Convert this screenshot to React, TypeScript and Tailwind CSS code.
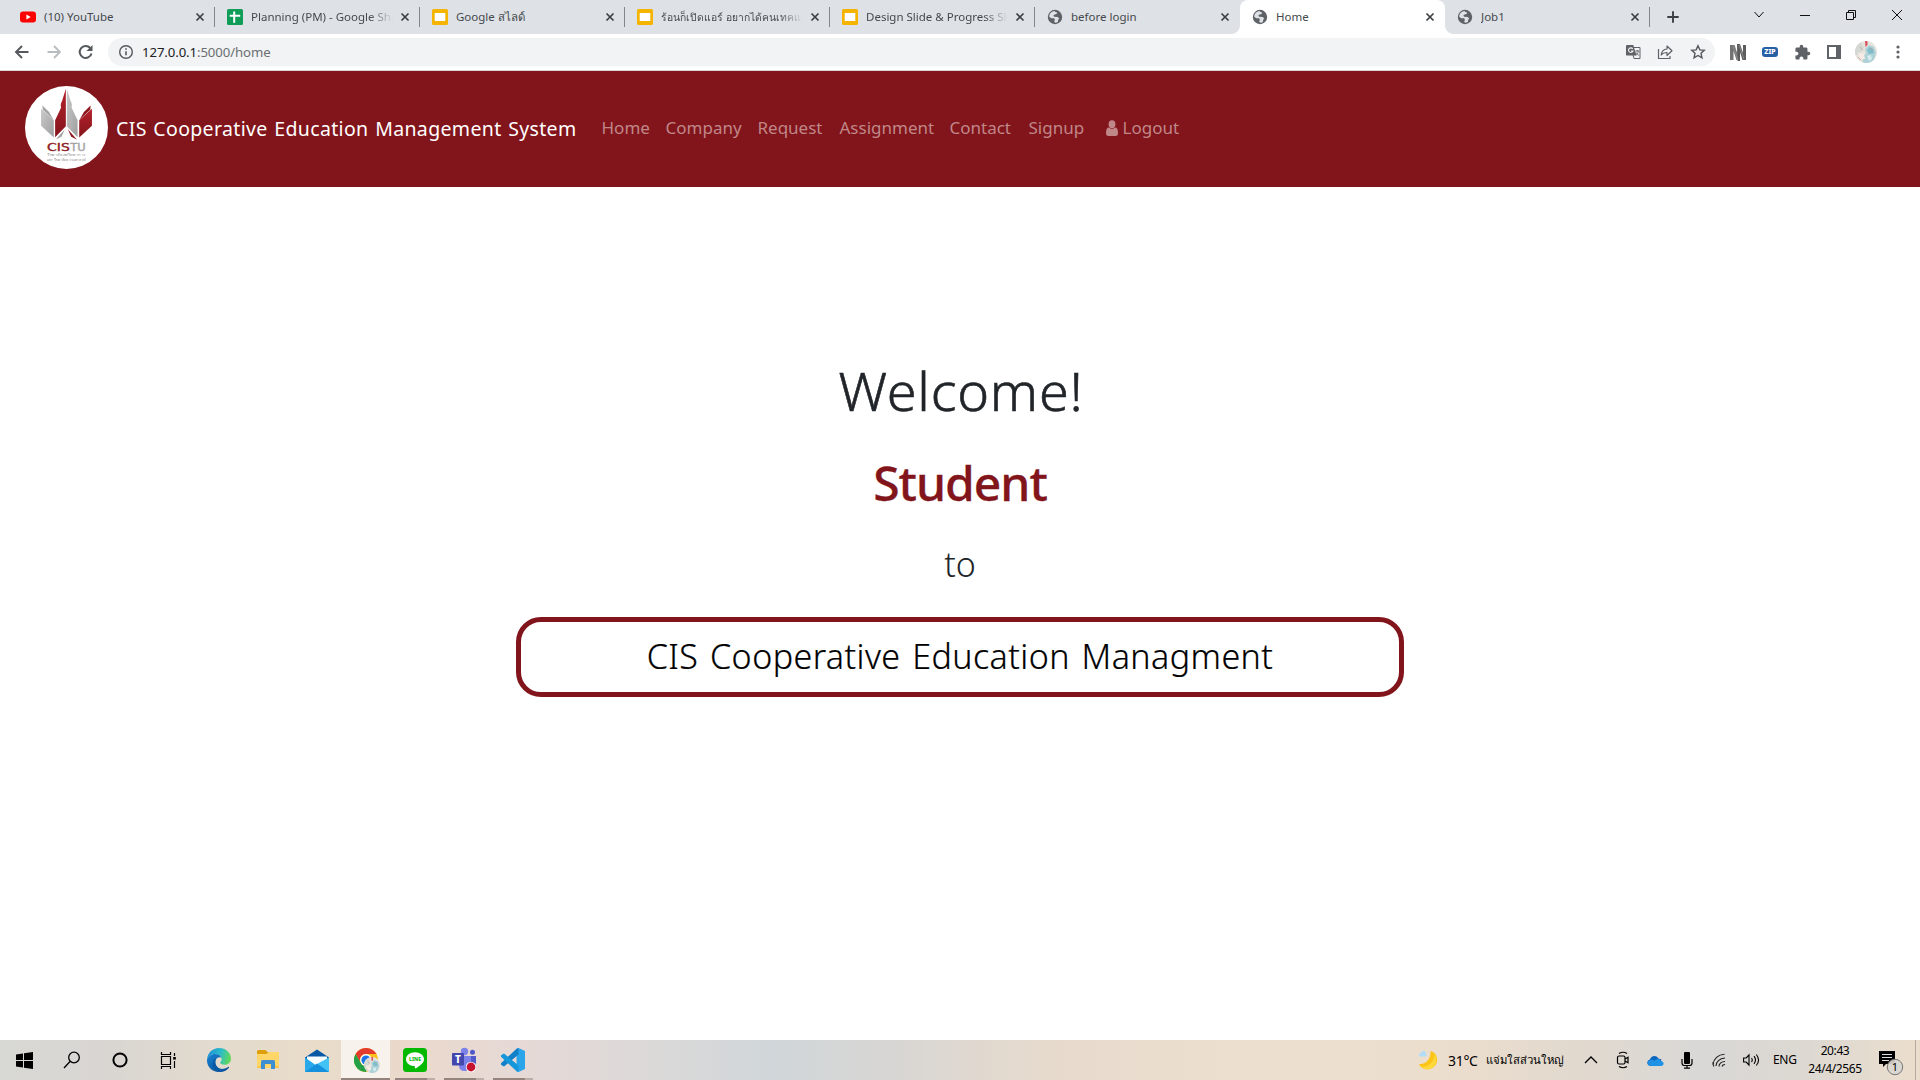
import type { ReactNode } from "react";
import { MdExtension } from "react-icons/md";

type Favicon = "youtube" | "sheets" | "slides" | "globe";

function FaviconIcon({ kind }: { kind: Favicon }) {
  if (kind === "youtube")
    return (
      <svg width="16" height="16" viewBox="0 0 16 16">
        <rect y="2.4" width="16" height="11.2" rx="3" fill="#f00" />
        <path d="M6.4 5.5v5l4.3-2.5z" fill="#fff" />
      </svg>
    );
  if (kind === "sheets")
    return (
      <svg width="16" height="16" viewBox="0 0 16 16">
        <rect width="16" height="16" rx="1.5" fill="#0f9d58" />
        <path d="M6.2 2.5h2v3.2h5v2h-5v6h-2v-6h-3.5v-2h3.5z" fill="#fff" />
      </svg>
    );
  if (kind === "slides")
    return (
      <svg width="16" height="16" viewBox="0 0 16 16">
        <rect width="16" height="16" rx="1.5" fill="#f5b400" />
        <rect x="2.7" y="4" width="10.6" height="8" fill="#fff" />
      </svg>
    );
  return (
    <svg width="16" height="16" viewBox="0 0 16 16">
      <circle cx="8" cy="8" r="7.2" fill="#5f6368" />
      <path
        d="M7.3 2.1C4 2.6 2.2 5 2.2 7.7l2.1 1.5 2.7.1.9 1.2-.7 1.9.9 1.4c.9 0 2-.3 2.800-.8l.2-2 1.1-1.5-1.5-1.4-3.5-.4-.9-1.3 1.4-1 1.9-.3.5-1.5-1.600-.6z"
        fill="#dee1e6"
      />
    </svg>
  );
}

function CloseMark() {
  return (
    <svg width="16" height="16" viewBox="0 0 16 16" className="shrink-0">
      <path d="M4.500 4.500l7 7m0-7l-7 7" stroke="#3c4043" strokeWidth="1.700" />
    </svg>
  );
}

interface TabInfo {
  icon: Favicon;
  title: string;
  active?: boolean;
  divider?: boolean;
  faded?: boolean;
  thai?: boolean;
}

const tabs: TabInfo[] = [
  { icon: "youtube", title: "(10) YouTube", divider: true },
  { icon: "sheets", title: "Planning (PM) - Google Sheets", divider: true, faded: true },
  { icon: "slides", title: "Google สไลด์", divider: true },
  { icon: "slides", title: "ร้อนก็เปิดแอร์ อยากได้คนเทคแคร์", divider: true, faded: true, thai: true },
  { icon: "slides", title: "Design Slide & Progress Slide", divider: true, faded: true },
  { icon: "globe", title: "before login" },
  { icon: "globe", title: "Home", active: true },
  { icon: "globe", title: "Job1", divider: true },
];

function Tab({ tab }: { tab: TabInfo }) {
  return (
    <div
      className={`relative flex h-[34px] w-[205px] shrink-0 items-center pl-[12px] pr-[7px] first:pl-[10px] ${
        tab.active ? "rounded-t-lg bg-white" : ""
      }`}
    >
      {tab.active && (
        <>
          <span className="absolute bottom-0 -left-2 size-2 bg-[radial-gradient(circle_at_0_0,transparent_7.5px,white_8px)]" />
          <span className="absolute bottom-0 -right-2 size-2 bg-[radial-gradient(circle_at_100%_0,transparent_7.5px,white_8px)]" />
        </>
      )}
      <FaviconIcon kind={tab.icon} />
      <span
        className={`ml-2 w-[144px] overflow-hidden whitespace-nowrap leading-[20px] text-[#45494d] ${
          tab.thai ? "text-[10.3px]" : "text-[11.5px]"
        } ${tab.faded ? "[mask-image:linear-gradient(to_right,black_118px,transparent_142px)]" : ""}`}
      >
        {tab.title}
      </span>
      <span className="ml-auto">
        <CloseMark />
      </span>
      {tab.divider && <span className="absolute top-[7px] right-0 h-5 w-px bg-[#80868b]" />}
    </div>
  );
}

function TabStrip() {
  return (
    <div className="flex h-[34px] bg-[#dee1e6] pl-[10px]">
      {tabs.map((t) => (
        <Tab key={t.title} tab={t} />
      ))}
      <div className="flex w-[46px] items-center justify-center">
        <svg width="14" height="14" viewBox="0 0 14 14">
          <path d="M7 1.300v11.400M1.300 7h11.400" stroke="#3c4043" strokeWidth="1.900" />
        </svg>
      </div>
      <div className="ml-auto flex h-[29px] items-center">
        <WindowButton d="M2.500 4l4.500 5 4.500-5" />
        <WindowButton d="M2 7.500h10" />
        <WindowButton d="M2.500 4.500h7v7h-7zM4.500 4.500v-2h7v7h-2" />
        <WindowButton d="M2 2l10 10M12 2L2 12" />
      </div>
    </div>
  );
}

function WindowButton({ d }: { d: string }) {
  return (
    <div className="flex w-[46px] justify-center">
      <svg width="14" height="14" viewBox="0 0 14 14" fill="none" stroke="#111" strokeWidth="1">
        <path d={d} />
      </svg>
    </div>
  );
}

function Slot({ children, className = "w-8" }: { children: ReactNode; className?: string }) {
  return <div className={`flex h-full shrink-0 items-center justify-center ${className}`}>{children}</div>;
}

function Toolbar() {
  return (
    <div className="flex h-[37px] items-center border-b border-[#d5d7da] bg-white pl-[6px] pr-[6px]">
      <Slot>
        <svg width="16" height="16" viewBox="0 0 16 16" fill="none" stroke="#54585c" strokeWidth="1.900">
          <path d="M14.500 8H2.500M8 2L2 8l6 6" />
        </svg>
      </Slot>
      <Slot>
        <svg width="16" height="16" viewBox="0 0 16 16" fill="none" stroke="#b9bcbf" strokeWidth="1.800">
          <path d="M1.500 8h12M8 2l6 6-6 6" />
        </svg>
      </Slot>
      <Slot>
        <svg width="16" height="16" viewBox="0 0 16 16" fill="none" stroke="#54585c" strokeWidth="2">
          <path d="M13.500 9.500A6 6 0 1 1 12.200 4" />
          <path d="M14.500 1v6h-6z" fill="#54585c" stroke="none" />
        </svg>
      </Slot>
      <div className="ml-[6px] flex h-7 w-[1608px] items-center rounded-full bg-[#f1f3f4] pl-[10px]">
        <svg width="16" height="16" viewBox="0 0 16 16" fill="none" stroke="#54585c" strokeWidth="1.400">
          <circle cx="8" cy="8" r="6.300" />
          <path d="M8 7.200v4M8 4.300v1.500" strokeWidth="1.600" />
        </svg>
        <span className="ml-2 mt-px text-[13.2px] tracking-[-0.1px] text-[#6b6f73]">
          <span className="text-[#202124]">127.0.0.1</span>:5000/home
        </span>
        <div className="ml-auto flex">
          <Slot>
            <svg width="16" height="16" viewBox="0 0 16 16">
              <path d="M6 3.500h9v11H9z" fill="#f1f3f4" stroke="#5f6368" />
              <path d="M1.500 1h6.800l3.200 10.500h-10A1 1 0 0 1 1 11V1.500z" fill="#5f6368" />
              <path d="M7.700 4.800A2.300 2.300 0 1 0 8 7H5.900" fill="none" stroke="#f1f3f4" strokeWidth="1.100" />
              <path d="M10.500 7h3.800M12.300 6v1m1 0c0 2-1.300 3.500-2.300 4m.3-2.500c.7 1.500 1.500 2.300 2.500 3" fill="none" stroke="#5f6368" strokeWidth=".9" />
            </svg>
          </Slot>
          <Slot>
            <svg width="16" height="16" viewBox="0 0 16 16" fill="none" stroke="#5f6368" strokeWidth="1.200">
              <path d="M1.500 5v9.500H13V12" />
              <path d="M4.200 11c.5-4 2.300-5.800 5.800-6V2l5 4.700-5 4.800v-3C7.300 8.500 5.500 9.300 4.200 11z" strokeLinejoin="round" />
            </svg>
          </Slot>
          <Slot className="w-[34px]">
            <svg width="16" height="16" viewBox="0 0 16 16" fill="none" stroke="#54585c" strokeWidth="1.400">
              <path d="M8 1.800l1.850 4.100 4.450.45-3.300 3 .95 4.400L8 11.500l-3.950 2.250.95-4.400-3.300-3 4.450-.45z" />
            </svg>
          </Slot>
        </div>
      </div>
      <Slot className="ml-[7px] w-8">
        <svg width="16" height="17" viewBox="0 0 16 17">
          <path d="M0 1h4.500l3 9V1h1.800v15H6.500L3.500 7v9H0z" fill="#737373" />
          <path d="M7 0h3l3 9V1h3v15h-3.500L10 8v9H7.500z" fill="#5c5c5c" />
          <path d="M3 2l5 14M9 1l5 14" stroke="#999" strokeWidth=".7" />
        </svg>
      </Slot>
      <Slot>
        <span className="flex h-[10px] w-4 items-center justify-center rounded-[3px] bg-[#2861a3] text-[7px] font-extrabold text-white">
          ZIP
        </span>
      </Slot>
      <Slot>
        <MdExtension className="size-[17px] text-[#5f6368]" />
      </Slot>
      <Slot>
        <svg width="14" height="14" viewBox="0 0 14 14">
          <path d="M0 0h14v14H0zM2 2v10h7V2z" fill="#5f6368" fillRule="evenodd" />
        </svg>
      </Slot>
      <Slot>
        <Avatar size={22} />
      </Slot>
      <Slot>
        <svg width="4" height="14" viewBox="0 0 4 14" fill="#5f6368">
          <circle cx="2" cy="2" r="1.600" />
          <circle cx="2" cy="7" r="1.600" />
          <circle cx="2" cy="12" r="1.600" />
        </svg>
      </Slot>
    </div>
  );
}

function Avatar({ size }: { size: number }) {
  return (
    <svg width={size} height={size} viewBox="0 0 22 22" className="rounded-full">
      <rect width="22" height="22" fill="#e6e3dc" />
      <path d="M0 5l6-4 3 6-4 6-5 1z" fill="#d3d8d3" />
      <path d="M8 22c-1-5 0-8 3-9l-1-5 4-4 5 2 2 6-2 7-4 3z" fill="#acd2d8" />
      <path d="M12 9l3-3 3 2 1 4-5 1z" fill="#80bcc9" />
      <path d="M10 0h2.500v4l-2 2z" fill="#d7505c" />
      <path d="M3 11l6 2 1 5-5 1z" fill="#f5eae4" />
      <path d="M12 15l4-1 1 4-3 2z" fill="#d5ecef" />
      <path d="M5 6l3 3M3 16l3 3M16 7l2 3" stroke="#b9a39c" strokeWidth=".8" />
    </svg>
  );
}

function CollegeLogo() {
  return (
    <svg width="83" height="83" viewBox="15 18 248 248" className="shrink-0">
      <defs>
        <linearGradient id="crimson" x1="0" y1="0" x2="0" y2="1">
          <stop offset="0" stopColor="#b5202a" />
          <stop offset="1" stopColor="#84151c" />
        </linearGradient>
        <linearGradient id="silver" x1="0" y1="0" x2="1" y2="1">
          <stop offset="0" stopColor="#c9c9c9" />
          <stop offset="1" stopColor="#9f9f9f" />
        </linearGradient>
      </defs>
      <circle cx="139" cy="142" r="124" fill="#fff" />
      <path d="M137 26v112l-32 33V120l18-38c-3-7 0-14 3-20z" fill="url(#crimson)" />
      <path d="M140 26v112l32 33V120l-18-38c3-7 0-14-3-20z" fill="url(#silver)" />
      <path d="M63 86l38 34v52l-38-35z" fill="url(#silver)" />
      <path d="M215 86l-38 34v52l38-35z" fill="url(#crimson)" />
      <path d="M67 76l20 20 13 23-32-30z" fill="#a6a6a6" />
      <path d="M211 76l-20 20-13 23 32-30z" fill="#8f1820" />
      <path d="M134 147l-27 31 17-8z" fill="#a0a0a0" />
      <path d="M143 147l27 31-17-8z" fill="#8f1820" />
      <g fontFamily="DejaVu Sans" fontSize="30">
        <text x="81" y="212" textLength="68" lengthAdjust="spacingAndGlyphs" fill="#8d1820" stroke="#8d1820">
          CIS
        </text>
        <text x="150" y="212" textLength="46" lengthAdjust="spacingAndGlyphs" fill="#a3a3a3" stroke="#a3a3a3">
          TU
        </text>
      </g>
      <text x="81" y="228" fontSize="10" textLength="116" lengthAdjust="spacingAndGlyphs" fill="#929292">
        วิทยาลัยสหวิทยาการ
      </text>
      <text x="81" y="242" fontSize="10" textLength="116" lengthAdjust="spacingAndGlyphs" fill="#929292">
        มหาวิทยาลัยธรรมศาสตร์
      </text>
    </svg>
  );
}

const navLinks = [
  { label: "Home", width: "w-[64px]" },
  { label: "Company", width: "w-[92px]" },
  { label: "Request", width: "w-[82px]" },
  { label: "Assignment", width: "w-[110px]" },
  { label: "Contact", width: "w-[79px]" },
  { label: "Signup", width: "w-[77px]" },
];

function Navbar() {
  return (
    <header className="flex h-[116px] bg-[#82151b] pl-[25px] pt-[15px]">
      <CollegeLogo />
      <div className="ml-[8px] mt-[28px] w-[485.5px] whitespace-nowrap text-[19.5px] leading-[30px] tracking-[0.35px] [word-spacing:1.2px] text-white">
        CIS Cooperative Education Management System
      </div>
      <nav className="mt-[27px] flex h-[30px] items-center whitespace-nowrap text-[17px] text-[#c08789]">
        {navLinks.map((l) => (
          <a key={l.label} className={l.width}>
            {l.label}
          </a>
        ))}
        <a className="flex items-center">
          <svg width="12" height="17" viewBox="0 0 12 17" fill="currentColor" className="mr-[5px]">
            <path d="M3 7.500Q0 7.500 0 13q0 3 2.500 3h7Q12 16 12 13q0-5.500-3-5.500Q6 10 3 7.500z" />
            <ellipse cx="6" cy="4.200" rx="3.400" ry="3.900" />
          </svg>
          Logout
        </a>
      </nav>
    </header>
  );
}

function Welcome() {
  return (
    <main className="flex flex-1 flex-col items-center bg-white text-[#212529]">
      <h1 className="ml-[2px] mt-[163px] text-[54px] font-light leading-[80px] tracking-[0.8px] [-webkit-text-stroke:0.6px_#212529]">
        Welcome!
      </h1>
      <h2 className="mt-[17px] text-[48px] font-medium leading-[72px] tracking-[-1px] text-[#82151b] [-webkit-text-stroke:0.3px_#82151b]">
        Student
      </h2>
      <p className="mt-[20px] text-[34px] font-light leading-[50px]">to</p>
      <div className="mt-[28px] flex h-20 w-[888px] items-center justify-center rounded-[25px] border-[5px] border-[#82151b] pb-[2px] text-[34px] font-light leading-[50px] tracking-[0.45px] [word-spacing:2.4px] text-black [-webkit-text-stroke:0.2px_black]">
        CIS Cooperative Education Managment
      </div>
    </main>
  );
}

function EdgeIcon() {
  return (
    <svg width="24" height="24" viewBox="0 0 24 24">
      <defs>
        <linearGradient id="edgeTop" x1="0" x2="1" y1=".3" y2=".5">
          <stop stopColor="#1b8fd8" />
          <stop offset=".55" stopColor="#2dbdc9" />
          <stop offset="1" stopColor="#63d957" />
        </linearGradient>
        <linearGradient id="edgeBody" x1="0" x2="1" y1="0" y2="1">
          <stop stopColor="#1683d4" />
          <stop offset="1" stopColor="#0c4a8c" />
        </linearGradient>
      </defs>
      <path d="M0 11.500C.5 5 5.500 0 12 0c7 0 12 5 12 10.500 0 4-3 6.300-6.500 6.300-3 0-4.300-1.200-4.300-2 0-.9 1.400-1.200 1.400-3.300C14.600 8.500 12 6 8 6c-4 0-7 2.500-8 5.500z" fill="url(#edgeTop)" />
      <path d="M0 11.500C1 8.500 4 6 8 6c3.500 0 5.500 1.700 6.300 3.500C12 8.500 8.500 10 8.300 13.500 8 18 12 21.500 16.500 20.800c2-.3 3.600-1.200 4.600-1.900.7-.4 1.300.1.900.8C20 22.500 16.500 24 12.500 24 5 24-.4 18.500 0 11.500z" fill="url(#edgeBody)" />
      <path d="M8.300 13.500c-.3 5 4 9 10.200 8.400-2.300 1.600-5 2.200-8 1.900C5 22 3 14 9.500 10c-.7 1-1.100 2-1.200 3.500z" fill="#0b5aa6" />
    </svg>
  );
}

function ExplorerIcon() {
  return (
    <svg width="22" height="20" viewBox="0 0 22 20">
      <path d="M0 1.500Q0 0 1.500 0h7l2.500 2.500H22V6H0z" fill="#dd9f0c" />
      <path d="M0 4h9.500L12 2h10v16H0z" fill="#ffd667" />
      <path d="M4 18v-6.500Q4 10 5.500 10h11q1.500 0 1.500 1.500V19h-4v-5H8v5H4z" fill="#3d8fd1" />
      <path d="M0 16h4v2H0zM18 16h4v2h-4z" fill="#fbc64a" />
    </svg>
  );
}

function MailIcon() {
  return (
    <svg width="24" height="23" viewBox="0 0 24 23">
      <path d="M0 8.500L12 .5l12 8V14H0z" fill="#0759a6" />
      <path d="M2 7.500h20V12l-10 6L2 12z" fill="#f8fcff" />
      <path d="M0 8.500L12 17l12-8.500V23H0z" fill="#29a9ea" />
      <path d="M0 23l12-8 12-6.500V23z" fill="#43c3f5" />
      <path d="M0 23l12-8.500L24 23z" fill="#1590dc" />
    </svg>
  );
}

function ChromeIcon() {
  return (
    <div className="relative h-6 w-6">
      <svg width="24" height="24" viewBox="0 0 24 24">
        <circle cx="12" cy="12" r="12" fill="#fbc116" />
        <path d="M1.600 6A12 12 0 0 1 22.400 6H12a6 6 0 0 0-5.200 9z" fill="#e33b2e" />
        <path d="M1.600 6A12 12 0 0 0 12 24l5.200-9A6 6 0 0 1 6.800 15z" fill="#24a148" />
        <circle cx="12" cy="12" r="5.900" fill="#fff" />
        <circle cx="12" cy="12" r="4.600" fill="#1a73e8" />
      </svg>
      <span className="absolute top-[9px] left-[10px] flex">
        <Avatar size={16} />
      </span>
    </div>
  );
}

function LineIcon() {
  return (
    <svg width="24" height="24" viewBox="0 0 24 24">
      <rect width="24" height="24" rx="3.500" fill="#00b900" />
      <path d="M12 4.200c5 0 9 3.100 9 7 0 2.500-1.800 4.500-4 6.200-1.700 1.400-4 2.900-4.800 3-.6 0-.2-1.300-.2-2.200-5 0-9-3-9-7s4-7 9-7z" fill="#fff" />
      <text x="12" y="13.300" textAnchor="middle" fontSize="5.800" fontWeight="800" textLength="12" lengthAdjust="spacingAndGlyphs" fill="#00b900">
        LINE
      </text>
    </svg>
  );
}

function TeamsIcon() {
  return (
    <svg width="26" height="26" viewBox="0 0 26 26">
      <circle cx="13.500" cy="4.500" r="3.700" fill="#7b83eb" />
      <circle cx="21.500" cy="5.200" r="2.500" fill="#5059c9" />
      <path d="M18 9h7v7q-1 4-5 3.500z" fill="#5059c9" />
      <path d="M8 9h12v9q-1 6-6.500 6T8 18z" fill="#7b83eb" />
      <rect x="1" y="6" width="12" height="12.500" rx="1" fill="#4248ad" />
      <text x="7" y="16" textAnchor="middle" fontSize="10" fontWeight="800" fill="#fff">
        T
      </text>
      <circle cx="20" cy="20" r="5.200" fill="#fff" />
      <circle cx="20" cy="20" r="4.400" fill="#c4122f" />
    </svg>
  );
}

function CodeIcon() {
  return (
    <svg width="24" height="24" viewBox="0 0 24 24">
      <path d="M17.500 0L24 3v18l-6.500 3-2-1V1z" fill="#2ba5ea" />
      <path d="M17.500 6.500L3 18.500 0 16.700v-1.500L15.500.8l2-.8z" fill="#1280c8" />
      <path d="M17.500 17.500L3 5.500 0 7.300v1.500l15.500 14.400 2 .8z" fill="#1697dc" />
    </svg>
  );
}

const runningApps: { name: string; icon: ReactNode; state: "pinned" | "active" | "open" }[] = [
  { name: "edge", icon: <EdgeIcon />, state: "pinned" },
  { name: "explorer", icon: <ExplorerIcon />, state: "pinned" },
  { name: "mail", icon: <MailIcon />, state: "pinned" },
  { name: "chrome", icon: <ChromeIcon />, state: "active" },
  { name: "line", icon: <LineIcon />, state: "open" },
  { name: "teams", icon: <TeamsIcon />, state: "open" },
  { name: "code", icon: <CodeIcon />, state: "open" },
];

function Taskbar() {
  return (
    <footer className="flex h-10 bg-[linear-gradient(to_right,#d8d8d5_0px,#d9d6d2_110px,#e4dbcd_230px,#e9dcc9_320px,#ead9cc_410px,#e6d9d6_520px,#dcd9d8_640px,#d0d6d9_770px,#d8d6d3_900px,#e6dacd_1040px,#ecdfcf_1240px,#ecdecd_1440px,#e2d9ce_1570px,#d9d8d6_1700px,#dcd8d2_1800px,#ebdecd_1920px)]">
      <Slot className="w-12">
        <svg width="17" height="17" viewBox="0 0 17 17">
          <path d="M0 2.500l7-1V8H0zM8 1.300L17 0v8H8zM0 9h7v6.500l-7-1zM8 9h9v8l-9-1.300z" fill="#000" />
        </svg>
      </Slot>
      <Slot className="w-12">
        <svg width="18" height="18" viewBox="0 0 18 18" fill="none" stroke="#000" strokeWidth="1.300">
          <circle cx="11" cy="6.500" r="5.300" />
          <path d="M7 10.500l-6 6.500" />
        </svg>
      </Slot>
      <Slot className="w-12">
        <svg width="18" height="18" viewBox="0 0 18 18">
          <circle cx="9" cy="9" r="6.600" fill="none" stroke="#000" strokeWidth="2" />
        </svg>
      </Slot>
      <Slot className="w-12">
        <svg width="17" height="17" viewBox="0 0 17 17" fill="none" stroke="#000" strokeWidth="1.200">
          <path d="M1.500 4.500h9v8h-9zM1.500 0v2.500h9V0M1.500 17v-2.500h9V17M14.500 1v3M14.500 9v7" />
          <rect x="13.200" y="5" width="2.600" height="2.600" fill="#000" stroke="none" />
        </svg>
      </Slot>
      <div className="ml-[2px] flex">
        {runningApps.map((app) => (
          <div
            key={app.name}
            className={`relative flex w-[49px] items-center justify-center ${
              app.state === "active" ? "bg-[#f7f2ec]" : ""
            }`}
          >
            {app.icon}
            {app.state === "active" && <span className="absolute inset-x-0 bottom-0 h-[2px] bg-[#95847d]" />}
            {app.state === "open" && (
              <span className="absolute bottom-0 left-[5px] flex h-[2px] w-10">
                <span className="w-8 bg-[#95847d]" />
                <span className="w-2 bg-[#bcaea8]" />
              </span>
            )}
          </div>
        ))}
      </div>
      <div className="ml-auto flex items-center text-[12px] text-black">
        <svg width="20" height="20" viewBox="0 0 20 20" className="mr-[10px]">
          <path d="M12.500 1c8 2 9 13 2 17C9 21 3 19 1 14c7 1 12-5 11.500-13z" fill="#fcc419" />
          <path d="M17 4c3 5 1 12-4 14.500-4 1.500-8 .5-10-2 7 1 13-4 14-12.500z" fill="#ffd83b" />
          <path d="M1.500 6.500Q0 5 1.500 3.500 3 3 3.500 2q1.500-2 3.500-.5 1.500 1 1 2.500 2 2-.5 2.500z" fill="#b4dcf5" />
        </svg>
        <span className="w-[38px] text-[14px] tracking-[-0.3px]">31°C</span>
        <span className="w-[77px] whitespace-nowrap text-[11.3px]">แจ่มใสส่วนใหญ่</span>
        <Slot className="ml-[12px] w-8">
          <svg width="14" height="8" viewBox="0 0 14 8" fill="none" stroke="#000" strokeWidth="1.300">
            <path d="M1 7l6-6 6 6" />
          </svg>
        </Slot>
        <Slot>
          <svg width="14" height="18" viewBox="0 0 14 18" fill="none" stroke="#000" strokeWidth="1.200">
            <rect x="1.500" y="5" width="7.500" height="8" rx="1.500" />
            <path d="M9 8l3-1.700v5.400L9 10M3 2.500Q7 0 11 2.500M3 15.500Q7 18 11 15.500" />
          </svg>
        </Slot>
        <Slot>
          <svg width="17" height="11" viewBox="0 0 17 11">
            <path d="M3.500 11C-1 10.500-.5 5 3 4.500 4 .5 9-.5 11.500 3.500l3 1L12 11z" fill="#0b67bd" />
            <path d="M3.500 11C.5 10.500 0 7 2.500 5.500c2-1.500 4-.5 5 .3C10 3 13 3.500 13.700 6 17.500 6 17.500 11 14 11z" fill="#1f92e5" />
          </svg>
        </Slot>
        <Slot>
          <svg width="12" height="17" viewBox="0 0 12 17">
            <rect x="3" y="0" width="6" height="12" rx="1" fill="#000" />
            <path d="M1 7v4q0 2.500 2.500 2.500h5Q11 13.500 11 11V7M6 13v3M3 16.200h6" fill="none" stroke="#000" strokeWidth="1.200" />
          </svg>
        </Slot>
        <Slot>
          <svg width="14" height="14" viewBox="0 0 14 14" fill="none" stroke="#222" strokeWidth="1.100">
            <path d="M1 11.500C1.500 6 6 1.500 12.500 1.200M4 13c0-4 3.500-7.700 9-8M7 13.500c0-2.800 2.500-5 6-5M10 13.500q.5-2 3-2" />
            <path d="M1 9q0 3.500 1 4.500" />
          </svg>
        </Slot>
        <Slot>
          <svg width="17" height="14" viewBox="0 0 17 14" fill="none" stroke="#000" strokeWidth="1.100">
            <path d="M.6 5v4h2.600L6 12V2L3.200 5zM8.500 5q1.500 2 0 4M11 3.200q3 3.800 0 7.600M13.300 1.500q4.500 5.500 0 11" />
          </svg>
        </Slot>
        <span className="ml-[6px] w-[35px] text-[12px] tracking-[-0.3px]">ENG</span>
        <div className="flex w-[54px] flex-col items-center whitespace-nowrap text-[12px] leading-[18px] tracking-[-0.4px]">
          <span>20:43</span>
          <span>24/4/2565</span>
        </div>
        <div className="relative ml-[16px] flex h-10 w-[37px] items-center">
          <svg width="26" height="26" viewBox="0 0 26 26" className="mt-[6px]">
            <path d="M1 1h16v13H8l-3 3v-3H1z" fill="#000" />
            <path d="M4 4.500h10M4 7.500h10M4 10.500h7" stroke="#ddd" strokeWidth="1" />
            <circle cx="17" cy="17" r="7.700" fill="#d8d5d0" fillOpacity=".93" stroke="#777" />
            <text x="17" y="21" textAnchor="middle" fontSize="11" fill="#000">
              1
            </text>
          </svg>
        </div>
        <span className="mr-1 h-10 w-px bg-[#b5ada2]" />
      </div>
    </footer>
  );
}

export default function App() {
  return (
    <div className="flex h-[1080px] w-[1920px] flex-col overflow-hidden bg-white font-['Noto_Sans',sans-serif]">
      <TabStrip />
      <Toolbar />
      <Navbar />
      <Welcome />
      <Taskbar />
    </div>
  );
}
